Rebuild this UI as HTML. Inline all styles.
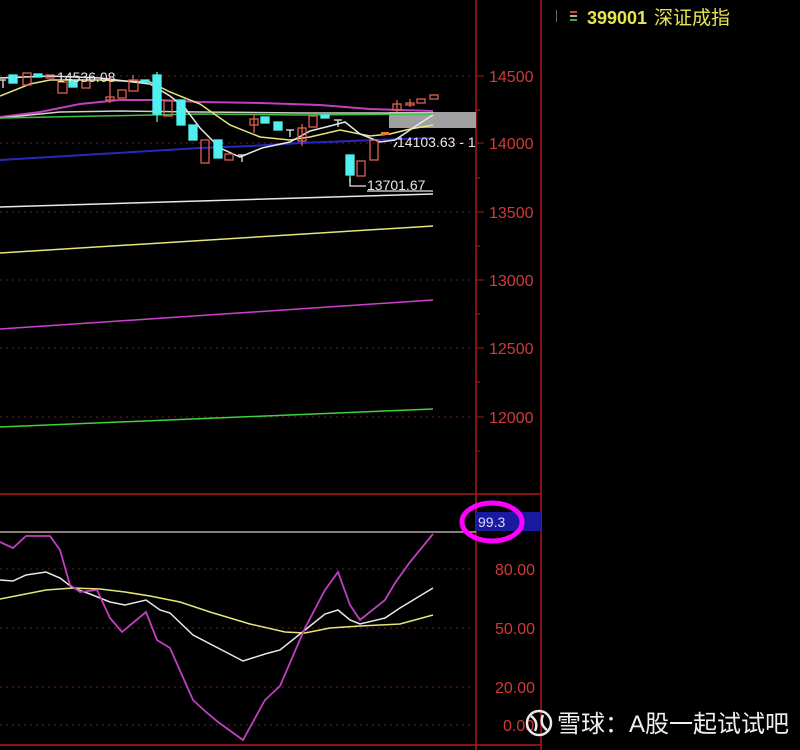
<!DOCTYPE html>
<html><head><meta charset="utf-8"><style>
html,body{margin:0;padding:0;background:#000;width:800px;height:750px;overflow:hidden}
svg{display:block}
text{font-family:"Liberation Sans","Noto Sans CJK SC",sans-serif}
</style></head><body>
<svg width="800" height="750" viewBox="0 0 800 750" xmlns="http://www.w3.org/2000/svg">
<rect width="800" height="750" fill="#000"/>
<rect x="556" y="10" width="1" height="12" fill="#666"/>
<rect x="570" y="11" width="7" height="2" fill="#c44"/>
<rect x="570" y="15" width="7" height="2" fill="#aaa"/>
<rect x="570" y="19" width="7" height="2" fill="#4a4"/>
<text x="587" y="24" font-size="18" font-weight="bold" fill="#e6e650">399001</text>
<text x="654" y="24" font-size="19" fill="#e6e650">深证成指</text>

<g stroke="#b01818" stroke-width="1.5" fill="none">
<line x1="476" y1="0" x2="476" y2="750"/>
<line x1="541" y1="0" x2="541" y2="750"/>
<line x1="0" y1="494" x2="541" y2="494"/>
<line x1="0" y1="745" x2="541" y2="745"/>
</g>
<g stroke="#6a2020" stroke-width="1" stroke-dasharray="2,4">
<line x1="0" y1="76" x2="474" y2="76"/><line x1="0" y1="143" x2="474" y2="143"/>
<line x1="0" y1="212" x2="474" y2="212"/><line x1="0" y1="280" x2="474" y2="280"/>
<line x1="0" y1="348" x2="474" y2="348"/><line x1="0" y1="417" x2="474" y2="417"/>
<line x1="0" y1="569" x2="474" y2="569"/><line x1="0" y1="628" x2="474" y2="628"/>
<line x1="0" y1="687" x2="474" y2="687"/><line x1="0" y1="725" x2="474" y2="725"/>
</g>
<g stroke="#b01818" stroke-width="1">
<line x1="476" y1="76" x2="484" y2="76"/><line x1="476" y1="143" x2="484" y2="143"/>
<line x1="476" y1="212" x2="484" y2="212"/><line x1="476" y1="280" x2="484" y2="280"/>
<line x1="476" y1="348" x2="484" y2="348"/><line x1="476" y1="417" x2="484" y2="417"/>
<line x1="476" y1="110" x2="480" y2="110"/><line x1="476" y1="178" x2="480" y2="178"/>
<line x1="476" y1="246" x2="480" y2="246"/><line x1="476" y1="314" x2="480" y2="314"/>
<line x1="476" y1="382" x2="480" y2="382"/><line x1="476" y1="451" x2="480" y2="451"/>
</g>
<g fill="#d03a3a" font-size="16">
<text x="489" y="82">14500</text><text x="489" y="149">14000</text>
<text x="489" y="218">13500</text><text x="489" y="286">13000</text>
<text x="489" y="354">12500</text><text x="489" y="423">12000</text>
<text x="495" y="575">80.00</text><text x="495" y="634">50.00</text>
<text x="495" y="693">20.00</text><text x="503" y="731">0.00</text>
</g>

<line x1="0" y1="207" x2="433" y2="194" stroke="#e8e8e8" stroke-width="1.5"/>
<line x1="0" y1="253" x2="433" y2="226" stroke="#e6e67a" stroke-width="1.5"/>
<line x1="0" y1="329" x2="433" y2="300" stroke="#d040d0" stroke-width="1.5"/>
<line x1="0" y1="427" x2="433" y2="409" stroke="#40d040" stroke-width="1.5"/>

<rect x="389" y="112" width="87" height="16" fill="#a0a0a0"/>

<polyline fill="none" stroke="#2828c0" stroke-width="2" points="0,160 100,154 200,148 250,146 300,143 350,141 400,139 433,138"/>
<polyline fill="none" stroke="#c040c0" stroke-width="2" points="0,117 40,112 80,104 120,100 160,100 200,102 260,103 320,105 370,109 433,111"/>
<polyline fill="none" stroke="#d0d0d0" stroke-width="1.5" points="0,118 60,112 120,111 200,112 300,113 433,113"/>
<polyline fill="none" stroke="#40c040" stroke-width="1.5" points="0,118 100,116 200,114 300,115 433,114"/>
<polyline fill="none" stroke="#e6e67a" stroke-width="1.5" points="0,96 30,84 50,80 100,80 150,82 170,92 200,104 230,125 260,137 290,140 310,137 340,130 370,136 390,134 410,129 433,125"/>
<polyline fill="none" stroke="#e8e8e8" stroke-width="1.5" points="0,78 50,76 100,78 150,84 170,96 185,108 200,128 220,148 240,157 262,148 290,142 310,131 330,126 345,122 360,134 380,142 395,140 410,130 425,120 433,115"/>

<g stroke-width="1.3">
<g stroke="#e06050" fill="none">
<rect x="23" y="73" width="8" height="12"/><rect x="46" y="75" width="8" height="3"/>
<rect x="58" y="82" width="9" height="11"/><rect x="82" y="81" width="8" height="7"/>
<line x1="110" y1="76" x2="110" y2="103"/><rect x="106" y="97" width="8" height="3"/>
<rect x="118" y="90" width="8" height="8"/><line x1="133" y1="75" x2="133" y2="80"/><rect x="129" y="80" width="9" height="11"/>
<rect x="164" y="101" width="8" height="15"/><rect x="201" y="140" width="8" height="23"/>
<rect x="225" y="154" width="8" height="6"/><line x1="254" y1="114" x2="254" y2="133"/><rect x="250" y="119" width="8" height="6"/>
<line x1="302" y1="124" x2="302" y2="146"/><rect x="298" y="128" width="8" height="13"/><rect x="309" y="116" width="8" height="11"/>
<rect x="357" y="161" width="8" height="15"/><rect x="370" y="140" width="8" height="20"/>
<line x1="397" y1="100" x2="397" y2="112"/><rect x="393" y="104" width="8" height="6"/>
<line x1="410" y1="99" x2="410" y2="107"/><rect x="406" y="103" width="8" height="2"/>
<rect x="417" y="99" width="8" height="4"/><rect x="430" y="95" width="8" height="4"/>
</g>
<g fill="#50f0f0" stroke="#50f0f0">
<rect x="9" y="75" width="8" height="8"/><rect x="34" y="74" width="8" height="3"/>
<rect x="69" y="81" width="8" height="6"/><rect x="141" y="80" width="8" height="2"/>
<line x1="157" y1="72" x2="157" y2="122"/><rect x="153" y="75" width="8" height="39"/>
<rect x="177" y="100" width="8" height="25"/><rect x="189" y="125" width="8" height="15"/>
<rect x="214" y="140" width="8" height="18"/><rect x="261" y="117" width="8" height="6"/>
<rect x="274" y="122" width="8" height="8"/><rect x="321" y="115" width="8" height="3"/>
<line x1="350" y1="155" x2="350" y2="182"/><rect x="346" y="155" width="8" height="20"/>
</g>
<g stroke="#e8e8e8">
<line x1="0" y1="80" x2="6" y2="80"/><line x1="3" y1="80" x2="3" y2="88"/>
<line x1="238" y1="155" x2="246" y2="155"/><line x1="242" y1="155" x2="242" y2="162"/>
<line x1="286" y1="130" x2="294" y2="130"/><line x1="290" y1="130" x2="290" y2="137"/>
<line x1="334" y1="120" x2="342" y2="120"/><line x1="338" y1="120" x2="338" y2="127"/>
</g>
<rect x="381" y="132" width="8" height="3" fill="#e08030"/>
</g>
<g fill="#e8e8e8" font-size="14">
<text x="57" y="82">14536.08</text>
<text x="397" y="147">14103.63 - 1</text>
<text x="367" y="190">13701.67</text>
</g>
<line x1="51" y1="76" x2="57" y2="76" stroke="#e8e8e8"/>
<polyline fill="none" stroke="#e8e8e8" stroke-width="1.3" points="350,178 350,186 366,186"/>
<line x1="367" y1="191" x2="433" y2="191" stroke="#e8e8e8" stroke-width="1.3"/>
<polyline fill="none" stroke="#e8e8e8" stroke-width="1.3" points="397,142 394,147"/>

<line x1="0" y1="532" x2="476" y2="532" stroke="#e0c8c8" stroke-width="1.3"/>
<polyline fill="none" stroke="#e6e67a" stroke-width="1.5" points="0,599 46,590 73,588 100,589 125,592 150,596 180,602 210,612 250,624 285,632 305,633 330,628 360,626 400,624 433,615"/>
<polyline fill="none" stroke="#e8e8e8" stroke-width="1.5" points="0,580 13,581 26,575 46,572 60,578 73,588 90,594 110,602 125,605 146,600 160,610 170,613 193,635 243,661 265,654 280,650 305,630 325,614 338,610 350,620 360,624 385,618 400,608 433,588"/>
<polyline fill="none" stroke="#c040c0" stroke-width="1.8" points="0,542 13,548 26,536 50,536 60,550 70,585 80,592 97,590 110,618 122,632 146,612 157,640 170,648 193,700 206,712 218,722 243,740 265,700 280,686 305,628 325,590 338,572 350,605 360,620 385,600 395,583 410,562 433,534"/>
<rect x="476" y="512" width="65" height="19" fill="#1a1aa0"/>
<text x="478" y="527" font-size="14" fill="#d8d8ff">99.3</text>
<ellipse cx="492" cy="522" rx="30" ry="19" fill="none" stroke="#ff00ff" stroke-width="5"/>

<circle cx="539" cy="723" r="12" fill="none" stroke="#e8e8e8" stroke-width="2.5"/>
<path d="M531 716 Q539 722 535 731 M547 730 Q539 724 543 715" fill="none" stroke="#e8e8e8" stroke-width="2.5"/>
<text x="557" y="732" font-size="24" fill="#f0f0f0">雪球：A股一起试试吧</text>
</svg>
</body></html>
